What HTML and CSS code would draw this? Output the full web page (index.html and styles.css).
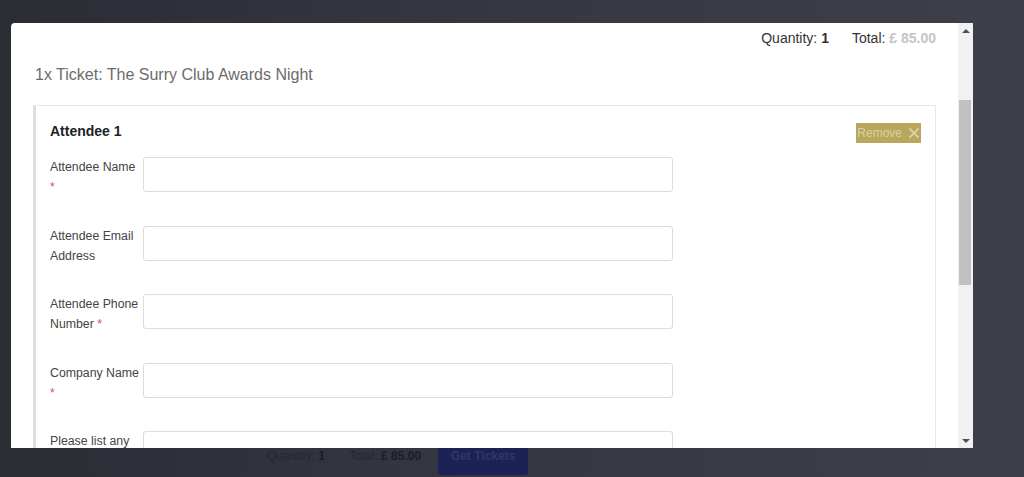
FILE: index.html
```html
<!DOCTYPE html>
<html lang="en">
<head>
    <meta charset="UTF-8">
    <meta name="viewport" content="width=device-width, initial-scale=1.0">
    <title>Tickets</title>
    <link rel="stylesheet" href="styles.css">
</head>
<body>
    <div class="pagina">
        <div class="modal">
            <div class="modal-corpo">
                <div class="resumo">
                    <span>Quantity: <b>1</b></span>
                    <span>Total: <b class="borrado">£ 85.00</b></span>
                </div>
                <div class="titulo">1x Ticket: The Surry Club Awards Night</div>

                <div class="cartao">
                    <div class="cartao-topo">
                        <h3>Attendee 1</h3>
                        <button class="remover">Remove
                            <svg width="12" height="12" viewBox="0 0 12 12">
                                <path d="M1.5 1.5 L10.5 10.5 M10.5 1.5 L1.5 10.5" stroke="currentColor" stroke-width="2" fill="none"/>
                            </svg>
                        </button>
                    </div>
                    <div class="campo">
                        <label>Attendee Name <span class="obrigatorio">*</span></label>
                        <input type="text">
                    </div>
                    <div class="campo">
                        <label>Attendee Email Address</label>
                        <input type="text">
                    </div>
                    <div class="campo">
                        <label>Attendee Phone Number <span class="obrigatorio">*</span></label>
                        <input type="text">
                    </div>
                    <div class="campo">
                        <label>Company Name <span class="obrigatorio">*</span></label>
                        <input type="text">
                    </div>
                    <div class="campo">
                        <label>Please list any dietary requirements</label>
                        <input type="text">
                    </div>
                </div>
            </div>
            <div class="barra-rolagem">
                <div class="seta seta-cima"></div>
                <div class="trilho"><div class="polegar"></div></div>
                <div class="seta seta-baixo"></div>
            </div>
        </div>

        <div class="rodape">
            <span>Quantity: <b>1</b></span>
            <span>Total: <b>£ 85.00</b></span>
            <button class="comprar">Get Tickets</button>
        </div>
    </div>
</body>
</html>
```

FILE: styles.css
```css
body {
    font-family: "Liberation Sans", Arial, sans-serif;
    margin: 0;
    height: 477px;
    overflow: hidden;
    background: linear-gradient(90deg, #2b2d35 0%, #353742 50%, #3d3f4b 100%);
}
.pagina {
    padding: 23px 0 0 11px;
}
.modal {
    width: 962px;
    height: 425px;
    background-color: #ffffff;
    border-radius: 4px 0 0 0;
    display: flex;
    overflow: hidden;
}
.modal-corpo {
    flex: 1;
    padding: 5px 22px 0 22px;
    overflow: hidden;
}
.resumo {
    display: flex;
    justify-content: flex-end;
    gap: 23px;
    font-size: 14px;
    line-height: 20px;
    color: #333333;
}
.borrado {
    color: #c4c4c4;
}
.titulo {
    margin: 17px 0 20px 2px;
    font-size: 16px;
    line-height: 20px;
    color: #6b6b6b;
}
.cartao {
    border: 1px solid #e8e8e8;
    border-left: 3px solid #dedede;
    padding: 17px 14px 0 14px;
}
.cartao-topo {
    display: flex;
    justify-content: space-between;
    align-items: center;
    height: 20px;
    margin-bottom: 14px;
}
.cartao-topo h3 {
    margin: 0;
    font-size: 14px;
    color: #222222;
    position: relative;
    top: -2px;
}
.remover {
    display: flex;
    align-items: center;
    gap: 6px;
    height: 20px;
    padding: 0 1px 0 1px;
    border: none;
    background-color: #baa75b;
    color: #d9d0a5;
    font-family: inherit;
    font-size: 12px;
}
.campo {
    display: flex;
    align-items: flex-start;
    margin-bottom: 28.5px;
}
.campo label {
    width: 90px;
    margin-right: 3px;
    font-size: 12.3px;
    line-height: 20px;
    color: #444444;
}
.obrigatorio {
    color: #d9534f;
}
.campo input {
    width: 530px;
    height: 35px;
    box-sizing: border-box;
    border: 1px solid #dcdcdc;
    border-radius: 3px;
    margin: 0;
}
.barra-rolagem {
    width: 15px;
    background-color: #f1f1f1;
    display: flex;
    flex-direction: column;
}
.seta {
    height: 15px;
    display: flex;
    align-items: center;
    justify-content: center;
}
.seta::before {
    content: "";
    border-left: 4px solid transparent;
    border-right: 4px solid transparent;
}
.seta-cima::before {
    border-bottom: 4px solid #505050;
}
.seta-baixo::before {
    border-top: 4px solid #505050;
}
.trilho {
    flex: 1;
    padding: 62px 2px 0 1px;
}
.polegar {
    height: 185px;
    background-color: #c1c1c1;
}
.rodape {
    display: flex;
    align-items: flex-start;
    padding-left: 256px;
    font-size: 12px;
    line-height: 16px;
    color: #262830;
}
.rodape span {
    margin-right: 24px;
}
.rodape span:nth-child(2) {
    margin-right: 17px;
}
.rodape b {
    color: #1c1e25;
}
.comprar {
    width: 90px;
    height: 27px;
    padding: 0 0 11px 0;
    border: none;
    border-radius: 0 0 3px 3px;
    background-color: #1d2256;
    color: #30366a;
    font-family: inherit;
    font-size: 12px;
    font-weight: bold;
    line-height: 16px;
}
```
